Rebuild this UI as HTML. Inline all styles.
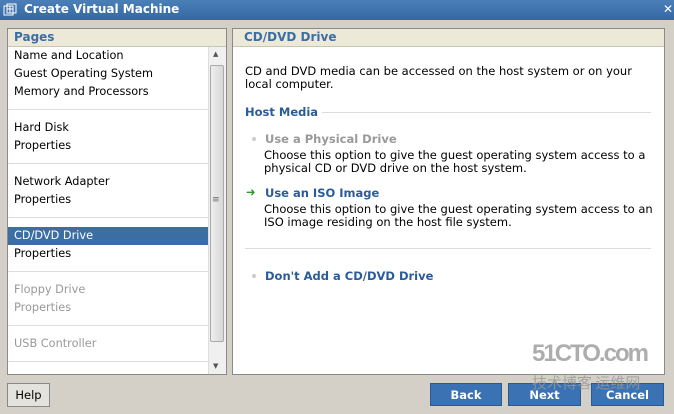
<!DOCTYPE html>
<html><head><meta charset="utf-8"><style>
*{margin:0;padding:0;box-sizing:border-box}
body{width:674px;height:414px;background:#d4d0c8;font-family:"DejaVu Sans","Liberation Sans",sans-serif;font-size:11.5px;color:#000;position:relative;overflow:hidden}
.a{position:absolute;white-space:nowrap}
.title{left:0;top:0;width:674px;height:20px;background:linear-gradient(#4a7fb8,#3468a4);color:#fff;font-weight:bold;font-size:12px;line-height:19px;padding-left:24px}
.panel{background:#fff;border:1px solid #8a8a8a}
.hdr{background:#ece9d8;color:#3a6ea5;font-weight:bold;font-size:12px;height:18px;line-height:17px;padding-left:6px;border-bottom:1px solid #c8c4b8}
.it{left:14px;font-size:11.3px}
.sep{left:8px;width:200px;height:1px;background:#ddd}
.gray{color:#999}
.btn{background:#3a72b4;color:#fff;font-weight:bold;text-align:center;line-height:22px;height:23px;border:1px solid #2a5a94}
.blue{color:#2a5c9a;font-weight:bold}
</style></head><body>
<div class="a title">Create Virtual Machine</div>
<svg class="a" style="left:3px;top:3px" width="14" height="14" viewBox="0 0 14 14"><rect x="1" y="3" width="9" height="9" fill="none" stroke="#fff"/><rect x="4" y="1" width="9" height="9" fill="none" stroke="#fff"/><path d="M4 6h6M7 3v7" stroke="#fff"/></svg>
<div class="a" style="left:663px;top:2px;width:10px;height:14px;color:#fff;font-weight:bold;font-size:12px;line-height:14px">✕</div>

<div class="a panel" style="left:7px;top:28px;width:220px;height:347px">
 <div class="hdr">Pages</div>
</div>
<div class="a it" style="top:49px">Name and Location</div>
<div class="a it" style="top:67px">Guest Operating System</div>
<div class="a it" style="top:85px">Memory and Processors</div>
<div class="a sep" style="top:109px"></div>
<div class="a it" style="top:121px">Hard Disk</div>
<div class="a it" style="top:139px">Properties</div>
<div class="a sep" style="top:163px"></div>
<div class="a it" style="top:175px">Network Adapter</div>
<div class="a it" style="top:193px">Properties</div>
<div class="a sep" style="top:217px"></div>
<div class="a" style="left:8px;top:227px;width:200px;height:18px;background:#3a6ea5"></div>
<div class="a it" style="top:229px;color:#fff">CD/DVD Drive</div>
<div class="a it" style="top:247px">Properties</div>
<div class="a sep" style="top:271px"></div>
<div class="a it gray" style="top:283px">Floppy Drive</div>
<div class="a it gray" style="top:301px">Properties</div>
<div class="a sep" style="top:325px"></div>
<div class="a it gray" style="top:337px">USB Controller</div>
<div class="a sep" style="top:361px"></div>
<div class="a" style="left:208px;top:47px;width:18px;height:327px;background:#f0f0f0;border-left:1px solid #ddd"></div>
<div class="a" style="left:210px;top:65px;width:14px;height:277px;background:linear-gradient(90deg,#eee,#d8d8d8);border:1px solid #aaa;border-radius:2px"></div>
<div class="a" style="left:212px;top:195px;font-size:9px;color:#666">≡</div>
<div class="a" style="left:213px;top:50px;font-size:7px;color:#555">▲</div>
<div class="a" style="left:213px;top:362px;font-size:7px;color:#555">▼</div>

<div class="a panel" style="left:232px;top:28px;width:433px;height:347px">
 <div class="hdr" style="padding-left:11px">CD/DVD Drive</div>
</div>
<div class="a" style="left:245px;top:65px;line-height:13px">CD and DVD media can be accessed on the host system or on your<br>local computer.</div>
<div class="a blue" style="left:245px;top:105px">Host Media</div>
<div class="a" style="left:322px;top:112px;width:329px;height:1px;background:#ddd"></div>
<div class="a" style="left:252px;top:137px;width:4px;height:4px;border-radius:2px;background:#ccc"></div>
<div class="a" style="left:265px;top:132px;color:#999;font-weight:bold">Use a Physical Drive</div>
<div class="a" style="left:264px;top:149px;line-height:13px">Choose this option to give the guest operating system access to a<br>physical CD or DVD drive on the host system.</div>
<div class="a" style="left:246px;top:185px;color:#2a9a2a;font-weight:bold">➜</div>
<div class="a blue" style="left:265px;top:186px">Use an ISO Image</div>
<div class="a" style="left:264px;top:203px;line-height:13px">Choose this option to give the guest operating system access to an<br>ISO image residing on the host file system.</div>
<div class="a" style="left:245px;top:248px;width:406px;height:1px;background:#ddd"></div>
<div class="a" style="left:252px;top:274px;width:4px;height:4px;border-radius:2px;background:#ccc"></div>
<div class="a blue" style="left:265px;top:269px">Don't Add a CD/DVD Drive</div>

<div class="a" style="left:7px;top:383px;width:43px;height:24px;border:1px solid #888;background:#e4e2dc;text-align:center;line-height:22px">Help</div>
<div class="a btn" style="left:430px;top:383px;width:72px">Back</div>
<div class="a btn" style="left:508px;top:383px;width:73px">Next</div>
<div class="a btn" style="left:591px;top:383px;width:73px">Cancel</div>
<div class="a" style="left:532px;top:340px;font-size:24px;font-weight:bold;color:#999;letter-spacing:-2px;opacity:.8;font-family:'Liberation Sans Narrow','Liberation Sans',sans-serif">51CTO.com</div>
<div class="a" style="left:532px;top:372px;font-size:15px;color:#999;opacity:.8;font-family:'Noto Sans CJK SC',sans-serif">技术博客 运维网</div>
</body></html>
